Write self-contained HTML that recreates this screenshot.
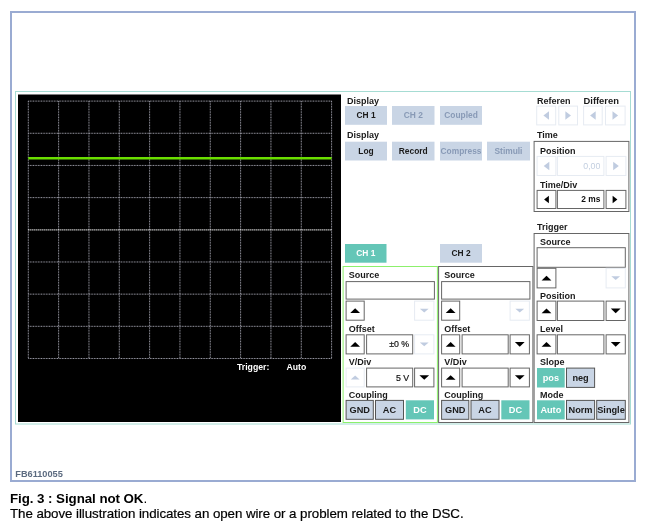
<!DOCTYPE html>
<html><head><meta charset="utf-8"><title>Fig 3</title>
<style>
html,body{margin:0;padding:0;background:#fff;}
body{width:646px;height:532px;position:relative;overflow:hidden;font-family:"Liberation Sans",sans-serif;}
#fig{position:absolute;left:0;top:0;font-family:"Liberation Sans",sans-serif;filter:blur(0.4px);}
#fig line.g{stroke:#a4a4b0;stroke-width:1;stroke-dasharray:0.9 0.7;}
#fig line.mid{stroke:#fff;stroke-width:1.3;stroke-dasharray:1.1 0.9;}
#fig line.sig{stroke:#6ade00;stroke-width:2.5;}
#cap1{position:absolute;left:10px;top:490.8px;font-size:13.33px;line-height:15px;color:#000;white-space:nowrap;letter-spacing:-0.06px;will-change:transform;}
#cap2{position:absolute;left:10px;top:505.8px;font-size:13.33px;line-height:15px;color:#000;white-space:nowrap;letter-spacing:-0.065px;will-change:transform;-webkit-text-stroke:0.2px #000;}
</style></head><body>
<svg id="fig" width="646" height="532" viewBox="0 0 646 532">
<rect x="11.00" y="12.00" width="624.00" height="469.00" fill="#fff" stroke="#9aabd2" stroke-width="2"/>
<rect x="15.50" y="91.50" width="615.00" height="332.50" fill="#fff" stroke="#a6dcd3" stroke-width="1"/>
<rect x="18.00" y="94.50" width="323.00" height="327.50" fill="#000"/>
<line class="g" x1="28.30" y1="101.10" x2="28.30" y2="358.50"/>
<line class="g" x1="58.63" y1="101.10" x2="58.63" y2="358.50"/>
<line class="g" x1="88.96" y1="101.10" x2="88.96" y2="358.50"/>
<line class="g" x1="119.29" y1="101.10" x2="119.29" y2="358.50"/>
<line class="g" x1="149.62" y1="101.10" x2="149.62" y2="358.50"/>
<line class="g" x1="179.95" y1="101.10" x2="179.95" y2="358.50"/>
<line class="g" x1="210.28" y1="101.10" x2="210.28" y2="358.50"/>
<line class="g" x1="240.61" y1="101.10" x2="240.61" y2="358.50"/>
<line class="g" x1="270.94" y1="101.10" x2="270.94" y2="358.50"/>
<line class="g" x1="301.27" y1="101.10" x2="301.27" y2="358.50"/>
<line class="g" x1="331.60" y1="101.10" x2="331.60" y2="358.50"/>
<line class="g" x1="28.30" y1="101.10" x2="331.60" y2="101.10"/>
<line class="g" x1="28.30" y1="133.27" x2="331.60" y2="133.27"/>
<line class="g" x1="28.30" y1="165.45" x2="331.60" y2="165.45"/>
<line class="g" x1="28.30" y1="197.62" x2="331.60" y2="197.62"/>
<line class="mid" x1="28.30" y1="229.80" x2="331.60" y2="229.80"/>
<line class="g" x1="28.30" y1="261.98" x2="331.60" y2="261.98"/>
<line class="g" x1="28.30" y1="294.15" x2="331.60" y2="294.15"/>
<line class="g" x1="28.30" y1="326.32" x2="331.60" y2="326.32"/>
<line class="g" x1="28.30" y1="358.50" x2="331.60" y2="358.50"/>
<line class="sig" x1="28.3" y1="158.2" x2="331.6" y2="158.2"/>
<text x="237.00" y="369.60" font-size="8.7" fill="#fff" text-anchor="start" font-weight="bold" >Trigger:</text>
<text x="286.50" y="369.60" font-size="8.7" fill="#fff" text-anchor="start" font-weight="bold" >Auto</text>
<text x="15.30" y="476.80" font-size="9.2" fill="#5c6b80" text-anchor="start" font-weight="bold" >FB6110055</text>
<text x="347.00" y="103.71" font-size="9" fill="#1a1a1a" text-anchor="start" font-weight="bold" >Display</text>
<rect x="345.00" y="106.00" width="42.00" height="18.80" fill="#c9d5e5"/>
<text x="366.00" y="118.31" font-size="8.4" fill="#1a1a1a" text-anchor="middle" font-weight="bold" >CH 1</text>
<rect x="392.00" y="106.00" width="42.50" height="18.80" fill="#c9d5e5"/>
<text x="413.25" y="118.31" font-size="8.4" fill="#889ab6" text-anchor="middle" font-weight="bold" >CH 2</text>
<rect x="440.00" y="106.00" width="42.00" height="18.80" fill="#c9d5e5"/>
<text x="461.00" y="118.31" font-size="8.4" fill="#889ab6" text-anchor="middle" font-weight="bold" >Coupled</text>
<text x="347.00" y="138.12" font-size="9" fill="#1a1a1a" text-anchor="start" font-weight="bold" >Display</text>
<rect x="345.00" y="141.70" width="42.00" height="18.80" fill="#c9d5e5"/>
<text x="366.00" y="154.01" font-size="8.4" fill="#1a1a1a" text-anchor="middle" font-weight="bold" >Log</text>
<rect x="392.00" y="141.70" width="42.50" height="18.80" fill="#c9d5e5"/>
<text x="413.25" y="154.01" font-size="8.4" fill="#1a1a1a" text-anchor="middle" font-weight="bold" >Record</text>
<rect x="440.00" y="141.70" width="42.00" height="18.80" fill="#c9d5e5"/>
<text x="461.00" y="154.01" font-size="8.4" fill="#889ab6" text-anchor="middle" font-weight="bold" >Compress</text>
<rect x="487.00" y="141.70" width="43.00" height="18.80" fill="#c9d5e5"/>
<text x="508.50" y="154.01" font-size="8.4" fill="#889ab6" text-anchor="middle" font-weight="bold" >Stimuli</text>
<text x="537.00" y="103.61" font-size="9" fill="#1a1a1a" text-anchor="start" font-weight="bold" >Referen</text>
<text x="583.50" y="103.98" font-size="9.4" fill="#1a1a1a" text-anchor="start" font-weight="bold" >Differen</text>
<rect x="536.70" y="106.10" width="19.00" height="18.80" fill="#fff" stroke="#e6ebf2" stroke-width="1"/>
<polygon points="549.00,111.20 543.40,115.50 549.00,119.80" fill="#c0cce0"/>
<rect x="558.80" y="106.10" width="18.70" height="18.80" fill="#fff" stroke="#e6ebf2" stroke-width="1"/>
<polygon points="565.35,111.20 570.95,115.50 565.35,119.80" fill="#c0cce0"/>
<rect x="583.60" y="106.10" width="18.60" height="18.80" fill="#fff" stroke="#e6ebf2" stroke-width="1"/>
<polygon points="595.70,111.20 590.10,115.50 595.70,119.80" fill="#c0cce0"/>
<rect x="605.50" y="106.10" width="19.60" height="18.80" fill="#fff" stroke="#e6ebf2" stroke-width="1"/>
<polygon points="612.50,111.20 618.10,115.50 612.50,119.80" fill="#c0cce0"/>
<text x="537.00" y="138.12" font-size="9" fill="#1a1a1a" text-anchor="start" font-weight="bold" >Time</text>
<rect x="534.10" y="141.40" width="94.80" height="70.10" fill="none" stroke="#666" stroke-width="1"/>
<text x="540.00" y="154.12" font-size="9" fill="#1a1a1a" text-anchor="start" font-weight="bold" >Position</text>
<rect x="537.10" y="156.40" width="18.80" height="19.10" fill="#fff" stroke="#e6ebf2" stroke-width="1"/>
<polygon points="549.30,161.65 543.70,165.95 549.30,170.25" fill="#c0cce0"/>
<rect x="557.40" y="156.40" width="46.50" height="19.10" fill="#fff" stroke="#e6ebf2" stroke-width="1"/>
<text x="600.40" y="169.00" font-size="8.8" fill="#c3cfe0" text-anchor="end" font-weight="normal" >0,00</text>
<rect x="606.10" y="156.40" width="19.80" height="19.10" fill="#fff" stroke="#e6ebf2" stroke-width="1"/>
<polygon points="613.20,161.65 618.80,165.95 613.20,170.25" fill="#c0cce0"/>
<text x="540.00" y="187.62" font-size="9" fill="#1a1a1a" text-anchor="start" font-weight="bold" >Time/Div</text>
<rect x="537.10" y="190.40" width="18.80" height="18.10" fill="#fff" stroke="#666" stroke-width="1"/>
<polygon points="548.90,195.75 544.10,199.45 548.90,203.15" fill="#000"/>
<rect x="557.40" y="190.40" width="46.50" height="18.10" fill="#fff" stroke="#666" stroke-width="1"/>
<text x="600.40" y="202.36" font-size="8.4" fill="#111" text-anchor="end" font-weight="bold" >2 ms</text>
<rect x="606.10" y="190.40" width="19.80" height="18.10" fill="#fff" stroke="#666" stroke-width="1"/>
<polygon points="612.60,195.75 617.40,199.45 612.60,203.15" fill="#000"/>
<text x="537.00" y="230.12" font-size="9" fill="#1a1a1a" text-anchor="start" font-weight="bold" >Trigger</text>
<rect x="534.10" y="233.50" width="94.80" height="189.00" fill="none" stroke="#666" stroke-width="1"/>
<text x="540.00" y="245.12" font-size="9" fill="#1a1a1a" text-anchor="start" font-weight="bold" >Source</text>
<rect x="537.10" y="247.70" width="88.20" height="19.60" fill="#fff" stroke="#666" stroke-width="1"/>
<rect x="537.10" y="268.30" width="18.80" height="19.60" fill="#fff" stroke="#666" stroke-width="1"/>
<polygon points="541.60,280.45 546.50,275.75 551.40,280.45" fill="#000"/>
<rect x="606.10" y="268.30" width="19.20" height="19.60" fill="#fff" stroke="#e6ebf2" stroke-width="1"/>
<polygon points="611.30,276.20 615.70,280.00 620.10,276.20" fill="#c0cce0"/>
<text x="540.00" y="299.12" font-size="9" fill="#1a1a1a" text-anchor="start" font-weight="bold" >Position</text>
<rect x="537.10" y="301.10" width="18.80" height="19.40" fill="#fff" stroke="#666" stroke-width="1"/>
<polygon points="541.60,313.15 546.50,308.45 551.40,313.15" fill="#000"/>
<rect x="557.40" y="301.10" width="46.50" height="19.40" fill="#fff" stroke="#666" stroke-width="1"/>
<rect x="606.10" y="301.10" width="19.20" height="19.40" fill="#fff" stroke="#666" stroke-width="1"/>
<polygon points="610.80,308.45 615.70,313.15 620.60,308.45" fill="#000"/>
<text x="540.00" y="332.12" font-size="9" fill="#1a1a1a" text-anchor="start" font-weight="bold" >Level</text>
<rect x="537.10" y="334.80" width="18.80" height="19.10" fill="#fff" stroke="#666" stroke-width="1"/>
<polygon points="541.60,346.70 546.50,342.00 551.40,346.70" fill="#000"/>
<rect x="557.40" y="334.80" width="46.50" height="19.10" fill="#fff" stroke="#666" stroke-width="1"/>
<rect x="606.10" y="334.80" width="19.20" height="19.10" fill="#fff" stroke="#666" stroke-width="1"/>
<polygon points="610.80,342.00 615.70,346.70 620.60,342.00" fill="#000"/>
<text x="540.00" y="365.42" font-size="9" fill="#1a1a1a" text-anchor="start" font-weight="bold" >Slope</text>
<rect x="537.00" y="368.00" width="27.70" height="19.50" fill="#64c6b7"/>
<text x="550.85" y="381.24" font-size="9.2" fill="#fff" text-anchor="middle" font-weight="bold" >pos</text>
<rect x="566.50" y="368.10" width="28.10" height="19.30" fill="#c9d5e5" stroke="#555" stroke-width="1"/>
<text x="580.55" y="381.24" font-size="9.2" fill="#1a1a1a" text-anchor="middle" font-weight="bold" >neg</text>
<text x="540.00" y="397.51" font-size="9" fill="#1a1a1a" text-anchor="start" font-weight="bold" >Mode</text>
<rect x="537.00" y="400.30" width="27.70" height="19.10" fill="#64c6b7"/>
<text x="550.85" y="413.34" font-size="9.2" fill="#fff" text-anchor="middle" font-weight="bold" >Auto</text>
<rect x="566.50" y="400.40" width="28.10" height="18.90" fill="#c9d5e5" stroke="#555" stroke-width="1"/>
<text x="580.55" y="413.34" font-size="9.2" fill="#1a1a1a" text-anchor="middle" font-weight="bold" >Norm</text>
<rect x="596.70" y="400.40" width="28.60" height="18.90" fill="#c9d5e5" stroke="#555" stroke-width="1"/>
<text x="611.00" y="413.34" font-size="9.2" fill="#1a1a1a" text-anchor="middle" font-weight="bold" >Single</text>
<rect x="345.00" y="244.00" width="41.50" height="18.70" fill="#64c6b7"/>
<text x="365.75" y="256.26" font-size="8.4" fill="#fff" text-anchor="middle" font-weight="bold" >CH 1</text>
<rect x="440.00" y="244.00" width="42.00" height="18.70" fill="#c9d5e5"/>
<text x="461.00" y="256.26" font-size="8.4" fill="#1a1a1a" text-anchor="middle" font-weight="bold" >CH 2</text>
<rect x="343.10" y="266.50" width="94.30" height="156.00" fill="none" stroke="#8cf06c" stroke-width="1"/>
<text x="348.70" y="277.92" font-size="9" fill="#1a1a1a" text-anchor="start" font-weight="bold" >Source</text>
<rect x="346.10" y="281.60" width="88.30" height="17.50" fill="#fff" stroke="#666" stroke-width="1"/>
<rect x="346.10" y="301.10" width="18.10" height="19.10" fill="#fff" stroke="#666" stroke-width="1"/>
<polygon points="350.25,313.00 355.15,308.30 360.05,313.00" fill="#000"/>
<rect x="414.60" y="301.10" width="19.30" height="19.10" fill="#fff" stroke="#e6ebf2" stroke-width="1"/>
<polygon points="419.85,308.75 424.25,312.55 428.65,308.75" fill="#c0cce0"/>
<text x="348.70" y="332.12" font-size="9" fill="#1a1a1a" text-anchor="start" font-weight="bold" >Offset</text>
<rect x="346.10" y="334.80" width="18.10" height="19.10" fill="#fff" stroke="#666" stroke-width="1"/>
<polygon points="350.25,346.70 355.15,342.00 360.05,346.70" fill="#000"/>
<rect x="366.60" y="334.80" width="46.10" height="19.10" fill="#fff" stroke="#666" stroke-width="1"/>
<text x="409.20" y="347.40" font-size="8.8" fill="#111" text-anchor="end" font-weight="normal" stroke="#111" stroke-width="0.2">&#177;0 %</text>
<rect x="414.60" y="334.80" width="19.30" height="19.10" fill="#fff" stroke="#e6ebf2" stroke-width="1"/>
<polygon points="419.85,342.45 424.25,346.25 428.65,342.45" fill="#c0cce0"/>
<text x="348.70" y="365.12" font-size="9" fill="#1a1a1a" text-anchor="start" font-weight="bold" >V/Div</text>
<rect x="346.10" y="368.10" width="18.10" height="18.80" fill="#fff" stroke="#e6ebf2" stroke-width="1"/>
<polygon points="350.75,379.40 355.15,375.60 359.55,379.40" fill="#c0cce0"/>
<rect x="366.60" y="368.10" width="46.10" height="18.80" fill="#fff" stroke="#666" stroke-width="1"/>
<text x="409.20" y="380.55" font-size="8.8" fill="#111" text-anchor="end" font-weight="normal" stroke="#111" stroke-width="0.2">5 V</text>
<rect x="414.60" y="368.10" width="19.30" height="18.80" fill="#fff" stroke="#666" stroke-width="1"/>
<polygon points="419.35,375.15 424.25,379.85 429.15,375.15" fill="#000"/>
<text x="348.70" y="397.92" font-size="9" fill="#1a1a1a" text-anchor="start" font-weight="bold" >Coupling</text>
<rect x="346.10" y="400.40" width="27.20" height="18.90" fill="#c9d5e5" stroke="#555" stroke-width="1"/>
<text x="359.70" y="413.34" font-size="9.2" fill="#1a1a1a" text-anchor="middle" font-weight="bold" >GND</text>
<rect x="375.50" y="400.40" width="28.00" height="18.90" fill="#c9d5e5" stroke="#555" stroke-width="1"/>
<text x="389.50" y="413.34" font-size="9.2" fill="#1a1a1a" text-anchor="middle" font-weight="bold" >AC</text>
<rect x="405.80" y="400.30" width="28.20" height="19.10" fill="#64c6b7"/>
<text x="419.90" y="413.34" font-size="9.2" fill="#fff" text-anchor="middle" font-weight="bold" >DC</text>
<rect x="438.60" y="266.50" width="94.30" height="156.00" fill="none" stroke="#666" stroke-width="1"/>
<text x="444.20" y="277.92" font-size="9" fill="#1a1a1a" text-anchor="start" font-weight="bold" >Source</text>
<rect x="441.60" y="281.60" width="88.30" height="17.50" fill="#fff" stroke="#666" stroke-width="1"/>
<rect x="441.60" y="301.10" width="18.10" height="19.10" fill="#fff" stroke="#666" stroke-width="1"/>
<polygon points="445.75,313.00 450.65,308.30 455.55,313.00" fill="#000"/>
<rect x="510.10" y="301.10" width="19.30" height="19.10" fill="#fff" stroke="#e6ebf2" stroke-width="1"/>
<polygon points="515.35,308.75 519.75,312.55 524.15,308.75" fill="#c0cce0"/>
<text x="444.20" y="332.12" font-size="9" fill="#1a1a1a" text-anchor="start" font-weight="bold" >Offset</text>
<rect x="441.60" y="334.80" width="18.10" height="19.10" fill="#fff" stroke="#666" stroke-width="1"/>
<polygon points="445.75,346.70 450.65,342.00 455.55,346.70" fill="#000"/>
<rect x="462.10" y="334.80" width="46.10" height="19.10" fill="#fff" stroke="#666" stroke-width="1"/>
<rect x="510.10" y="334.80" width="19.30" height="19.10" fill="#fff" stroke="#666" stroke-width="1"/>
<polygon points="514.85,342.00 519.75,346.70 524.65,342.00" fill="#000"/>
<text x="444.20" y="365.12" font-size="9" fill="#1a1a1a" text-anchor="start" font-weight="bold" >V/Div</text>
<rect x="441.60" y="368.10" width="18.10" height="18.80" fill="#fff" stroke="#666" stroke-width="1"/>
<polygon points="445.75,379.85 450.65,375.15 455.55,379.85" fill="#000"/>
<rect x="462.10" y="368.10" width="46.10" height="18.80" fill="#fff" stroke="#666" stroke-width="1"/>
<rect x="510.10" y="368.10" width="19.30" height="18.80" fill="#fff" stroke="#666" stroke-width="1"/>
<polygon points="514.85,375.15 519.75,379.85 524.65,375.15" fill="#000"/>
<text x="444.20" y="397.92" font-size="9" fill="#1a1a1a" text-anchor="start" font-weight="bold" >Coupling</text>
<rect x="441.60" y="400.40" width="27.20" height="18.90" fill="#c9d5e5" stroke="#555" stroke-width="1"/>
<text x="455.20" y="413.34" font-size="9.2" fill="#1a1a1a" text-anchor="middle" font-weight="bold" >GND</text>
<rect x="471.00" y="400.40" width="28.00" height="18.90" fill="#c9d5e5" stroke="#555" stroke-width="1"/>
<text x="485.00" y="413.34" font-size="9.2" fill="#1a1a1a" text-anchor="middle" font-weight="bold" >AC</text>
<rect x="501.30" y="400.30" width="28.20" height="19.10" fill="#64c6b7"/>
<text x="515.40" y="413.34" font-size="9.2" fill="#fff" text-anchor="middle" font-weight="bold" >DC</text>
</svg>
<div id="cap1"><b>Fig. 3 : Signal not OK</b>.</div>
<div id="cap2">The above illustration indicates an open wire or a problem related to the DSC.</div>
</body></html>
